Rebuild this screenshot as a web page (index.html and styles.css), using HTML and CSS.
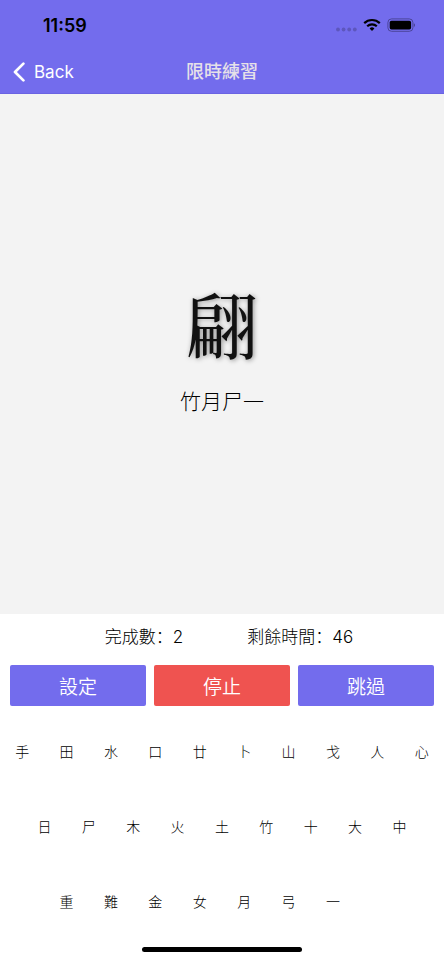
FILE: index.html
```
<!DOCTYPE html>
<html lang="zh-Hant">
<head>
<meta charset="utf-8">
<meta name="viewport" content="width=device-width, initial-scale=1">
<title>限時練習</title>
<link rel="stylesheet" href="styles.css">
</head>
<body>
<div class="app">
  <header class="header">
    <div class="status-bar">
      <span class="clock">11:59</span>
      <svg class="indicators" width="80" height="16" viewBox="0 0 80 16" aria-hidden="true">
        <g fill="#5d56bd">
          <circle cx="3" cy="12.5" r="1.9"/><circle cx="8.6" cy="12.5" r="1.9"/><circle cx="14.2" cy="12.5" r="1.9"/><circle cx="19.8" cy="12.5" r="1.9"/>
        </g>
        <g fill="none" stroke="#000" stroke-width="2.2">
          <path d="M29.2 6.1a11.4 11.4 0 0 1 15.6 0"/>
          <path d="M32.2 9.3a7 7 0 0 1 9.6 0"/>
        </g>
        <path d="M34.6 11.4a3.5 3.5 0 0 1 4.8 0L37 14z"/>
        <rect x="52.9" y="1.9" width="25" height="12.4" rx="3.6" fill="none" stroke="#4b459a"/>
        <rect x="54.7" y="3.7" width="21.4" height="8.8" rx="1.8"/>
        <path d="M78.8 6.2q1.3.6 1.3 1.9t-1.3 1.9z" fill="#4b459a"/>
      </svg>
    </div>
    <nav class="nav-bar">
      <a class="back" href="#">
        <svg width="12" height="20" viewBox="0 0 12 20" aria-hidden="true"><path d="M10.4 1.6 2 10l8.4 8.4" fill="none" stroke="#fff" stroke-width="2.7" stroke-linecap="round" stroke-linejoin="round"/></svg>
        Back
      </a>
      <h1 class="title">限時練習</h1>
    </nav>
  </header>
  <main class="practice">
    <div class="character">翩</div>
    <div class="code">竹月尸一</div>
  </main>
  <section class="panel">
    <div class="stats">
      <span>完成數<span class="colon" lang="zh-Hans">：</span>2</span>
      <span>剩餘時間<span class="colon" lang="zh-Hans">：</span>46</span>
    </div>
    <div class="actions">
      <button class="action" type="button">設定</button>
      <button class="action action-stop" type="button">停止</button>
      <button class="action" type="button">跳過</button>
    </div>
    <div class="keyboard">
      <div class="key-row">
        <button class="key" type="button">手</button><button class="key" type="button">田</button><button class="key" type="button">水</button><button class="key" type="button">口</button><button class="key" type="button">廿</button><button class="key" type="button">卜</button><button class="key" type="button">山</button><button class="key" type="button">戈</button><button class="key" type="button">人</button><button class="key" type="button">心</button>
      </div>
      <div class="key-row key-row-middle">
        <button class="key" type="button">日</button><button class="key" type="button">尸</button><button class="key" type="button">木</button><button class="key" type="button">火</button><button class="key" type="button">土</button><button class="key" type="button">竹</button><button class="key" type="button">十</button><button class="key" type="button">大</button><button class="key" type="button">中</button>
      </div>
      <div class="key-row key-row-bottom">
        <button class="key" type="button">重</button><button class="key" type="button">難</button><button class="key" type="button">金</button><button class="key" type="button">女</button><button class="key" type="button">月</button><button class="key" type="button">弓</button><button class="key" type="button">一</button>
      </div>
    </div>
    <div class="home-indicator"></div>
  </section>
</div>
</body>
</html>
```
FILE: styles.css
```
* {
  box-sizing: border-box;
}

body {
  margin: 0;
  background: #fff;
  color: #000;
  font-family: Inter, "Noto Sans CJK TC", sans-serif;
}

button {
  margin: 0;
  padding: 0;
  border: 0;
  font-family: inherit;
}

.app {
  display: flex;
  flex-direction: column;
  min-height: 100vh;
}

.header {
  background: #736ced;
  border-bottom: 1px solid #6a63e2;
}

.status-bar {
  display: flex;
  align-items: center;
  justify-content: space-between;
  height: 50px;
  padding: 0 29px 0 43px;
}

.clock {
  font-size: 18px;
  font-weight: 600;
}

.nav-bar {
  display: grid;
  grid-template-columns: 1fr auto 1fr;
  align-items: center;
  height: 43px;
  padding: 0 13px;
}

.back {
  display: flex;
  align-items: center;
  gap: 9px;
  color: #fff;
  font-size: 17px;
  text-decoration: none;
}

.title {
  margin: 0;
  color: #e6e1e8;
  font-size: 18px;
  font-weight: 500;
  line-height: 24px;
}

.practice {
  flex: 1;
  display: flex;
  flex-direction: column;
  align-items: center;
  justify-content: center;
  gap: 24px;
  padding-bottom: 8px;
  background: #f3f3f3;
}

.character {
  font-family: "Noto Serif CJK TC", "Noto Sans CJK TC", serif;
  font-size: 72px;
  font-weight: 500;
  line-height: 80px;
  color: #111;
  text-shadow: 1px 1px 5px rgba(0, 0, 0, 0.4);
}

.code {
  font-size: 21px;
  font-weight: 300;
  line-height: 32px;
}

.stats {
  display: flex;
  justify-content: center;
  gap: 64px;
  padding: 10px 0 14px 14px;
  font-size: 17px;
  font-weight: 300;
  line-height: 27px;
}

.colon {
  font-family: "Noto Sans CJK SC", sans-serif;
  line-height: 1;
}

.actions {
  display: grid;
  grid-template-columns: repeat(3, 1fr);
  gap: 8px;
  padding: 0 10px;
}

.action {
  height: 41px;
  border-radius: 2px;
  background: #736ced;
  color: #fff;
  font-size: 19px;
  font-weight: 350;
}

.action-stop {
  background: #ef5350;
}

.keyboard {
  margin-top: 7px;
}

.key-row {
  display: flex;
}

.key-row-middle {
  padding-left: 5%;
}

.key-row-bottom {
  padding-left: 10%;
}

.key {
  width: 10vw;
  height: 75px;
  background: transparent;
  color: #000;
  font-size: 14px;
  font-weight: 300;
}

.home-indicator {
  width: 36%;
  height: 5px;
  margin: 9px auto 8px;
  border-radius: 3px;
  background: #000;
}
```
